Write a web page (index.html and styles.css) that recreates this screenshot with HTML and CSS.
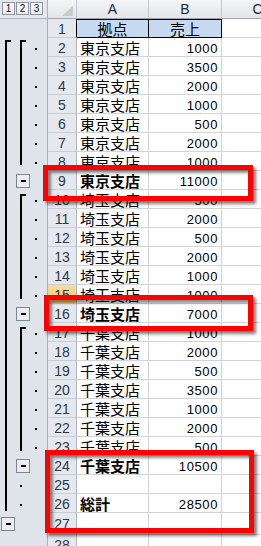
FILE: index.html
```html
<!DOCTYPE html>
<html lang="ja">

<head>
    <meta charset="UTF-8">
    <meta name="viewport" content="width=device-width, initial-scale=1.0">
    <title>小計</title>
    <link rel="stylesheet" href="styles.css">
</head>

<body>
    <div class="page">
        <div class="outline">
            <div class="levels">
                <span class="lv">1</span>
                <span class="lv">2</span>
                <span class="lv">3</span>
            </div>
            <svg class="tree" width="47" height="527" viewBox="0 0 47 527">
                <g class="line">
                    <rect x="5" y="21" width="2" height="471" />
                    <rect x="5" y="21" width="6" height="2" />
                    <rect x="20" y="21" width="2" height="125" />
                    <rect x="20" y="21" width="6" height="2" />
                    <rect x="20" y="175" width="2" height="105" />
                    <rect x="20" y="175" width="6" height="2" />
                    <rect x="20" y="308" width="2" height="124" />
                    <rect x="20" y="308" width="6" height="2" />
                </g>
                <g class="dot">
                    <rect x="35" y="29" width="2" height="2" />
                    <rect x="35" y="48" width="2" height="2" />
                    <rect x="35" y="67" width="2" height="2" />
                    <rect x="35" y="86" width="2" height="2" />
                    <rect x="35" y="105" width="2" height="2" />
                    <rect x="35" y="124" width="2" height="2" />
                    <rect x="35" y="143" width="2" height="2" />
                    <rect x="35" y="181" width="2" height="2" />
                    <rect x="35" y="200" width="2" height="2" />
                    <rect x="35" y="219" width="2" height="2" />
                    <rect x="35" y="238" width="2" height="2" />
                    <rect x="35" y="257" width="2" height="2" />
                    <rect x="35" y="276" width="2" height="2" />
                    <rect x="35" y="314" width="2" height="2" />
                    <rect x="35" y="333" width="2" height="2" />
                    <rect x="35" y="352" width="2" height="2" />
                    <rect x="35" y="371" width="2" height="2" />
                    <rect x="35" y="390" width="2" height="2" />
                    <rect x="35" y="409" width="2" height="2" />
                    <rect x="35" y="428" width="2" height="2" />
                    <rect x="20" y="466" width="2" height="2" />
                    <rect x="20" y="485" width="2" height="2" />
                </g>
                <!-- collapse buttons -->
                <rect class="box" x="16.5" y="155.5" width="13" height="13" />
                <rect class="bar" x="21" y="161" width="5" height="2" />
                <rect class="box" x="16.5" y="288.5" width="13" height="13" />
                <rect class="bar" x="21" y="294" width="5" height="2" />
                <rect class="box" x="16.5" y="440.5" width="13" height="13" />
                <rect class="bar" x="21" y="446" width="5" height="2" />
                <rect class="box" x="1.5" y="498.5" width="13" height="13" />
                <rect class="bar" x="6" y="504" width="5" height="2" />
            </svg>
        </div>

        <div class="sheet">
            <div class="corner"></div>
            <div class="ch">A</div>
            <div class="ch">B</div>
            <div class="ch">C</div>

            <div class="rh first">1</div><div class="c hd">拠点</div><div class="c hd">売上</div><div class="c"></div>
            <div class="rh">2</div><div class="c">東京支店</div><div class="c n">1000</div><div class="c"></div>
            <div class="rh">3</div><div class="c">東京支店</div><div class="c n">3500</div><div class="c"></div>
            <div class="rh">4</div><div class="c">東京支店</div><div class="c n">2000</div><div class="c"></div>
            <div class="rh">5</div><div class="c">東京支店</div><div class="c n">1000</div><div class="c"></div>
            <div class="rh">6</div><div class="c">東京支店</div><div class="c n">500</div><div class="c"></div>
            <div class="rh">7</div><div class="c">東京支店</div><div class="c n">2000</div><div class="c"></div>
            <div class="rh">8</div><div class="c">東京支店</div><div class="c n">1000</div><div class="c"></div>
            <div class="rh">9</div><div class="c b">東京支店</div><div class="c n">11000</div><div class="c"></div>
            <div class="rh">10</div><div class="c">埼玉支店</div><div class="c n">500</div><div class="c"></div>
            <div class="rh">11</div><div class="c">埼玉支店</div><div class="c n">2000</div><div class="c"></div>
            <div class="rh">12</div><div class="c">埼玉支店</div><div class="c n">500</div><div class="c"></div>
            <div class="rh">13</div><div class="c">埼玉支店</div><div class="c n">2000</div><div class="c"></div>
            <div class="rh">14</div><div class="c">埼玉支店</div><div class="c n">1000</div><div class="c"></div>
            <div class="rh sel">15</div><div class="c">埼玉支店</div><div class="c n">1000</div><div class="c"></div>
            <div class="rh">16</div><div class="c b">埼玉支店</div><div class="c n">7000</div><div class="c"></div>
            <div class="rh">17</div><div class="c">千葉支店</div><div class="c n">1000</div><div class="c"></div>
            <div class="rh">18</div><div class="c">千葉支店</div><div class="c n">2000</div><div class="c"></div>
            <div class="rh">19</div><div class="c">千葉支店</div><div class="c n">500</div><div class="c"></div>
            <div class="rh">20</div><div class="c">千葉支店</div><div class="c n">3500</div><div class="c"></div>
            <div class="rh">21</div><div class="c">千葉支店</div><div class="c n">1000</div><div class="c"></div>
            <div class="rh">22</div><div class="c">千葉支店</div><div class="c n">2000</div><div class="c"></div>
            <div class="rh">23</div><div class="c">千葉支店</div><div class="c n">500</div><div class="c"></div>
            <div class="rh">24</div><div class="c b">千葉支店</div><div class="c n">10500</div><div class="c"></div>
            <div class="rh">25</div><div class="c"></div><div class="c n"></div><div class="c"></div>
            <div class="rh">26</div><div class="c b">総計</div><div class="c n">28500</div><div class="c"></div>
            <div class="rh">27</div><div class="c"></div><div class="c n"></div><div class="c"></div>
            <div class="rh">28</div><div class="c"></div><div class="c n"></div><div class="c"></div>
        </div>

        <div class="mark m1"></div>
        <div class="mark m2"></div>
        <div class="mark m3"></div>
    </div>
</body>

</html>
```

FILE: styles.css
```css
* {
    margin: 0;
    padding: 0;
    box-sizing: border-box;
}

body {
    background-color: #fff;
}

.page {
    position: relative;
    display: flex;
    width: 261px;
    height: 546px;
    overflow: hidden;
}

/* Outline (grouping) pane */
.outline {
    width: 48px;
    flex: none;
    background-color: #dfe3ea;
    border-right: 1px solid #aab1bc;
}

.levels {
    height: 19px;
    display: flex;
    gap: 1px;
    padding: 2px 0 0 2px;
    background-color: #e4e7ed;
    border-bottom: 1px solid #b1b7c1;
}

.lv {
    width: 13px;
    height: 13px;
    display: flex;
    align-items: center;
    justify-content: center;
    border: 1px solid #8d949f;
    background: linear-gradient(#fafbfc, #e9ecf0);
    font: 10px "Liberation Sans", sans-serif;
    color: #111;
}

.tree {
    display: block;
}

.tree .line rect,
.tree .dot rect,
.tree .bar {
    fill: #000;
}

.tree .box {
    fill: #eceef2;
    stroke: #7f8692;
    stroke-width: 1;
}

/* Grid */
.sheet {
    display: grid;
    grid-template-columns: 29px 72px 73px 72px;
    grid-template-rows: repeat(27, 19px) 22px 19px;
    flex: none;
}

.corner,
.ch {
    background: linear-gradient(#f4f5f7, #e3e5e9);
    border-right: 1px solid #c3c7cd;
    border-bottom: 1px solid #9ea5ae;
}

.corner {
    position: relative;
}

.corner::after {
    content: "";
    position: absolute;
    right: 3px;
    bottom: 2px;
    width: 11px;
    height: 10px;
    background-color: #c8cacd;
    clip-path: polygon(100% 0, 100% 100%, 0 100%);
}

.ch {
    display: flex;
    align-items: center;
    justify-content: center;
    font: 14px "Liberation Sans", sans-serif;
    color: #1e2b3b;
}

.rh {
    display: flex;
    align-items: center;
    justify-content: center;
    padding-top: 1px;
    background-color: #e5e8ed;
    border-right: 1px solid #aeb5bf;
    border-bottom: 1px solid #c8ccd3;
    font: 14px "Liberation Sans", sans-serif;
    color: #2b3a4e;
}

.rh.first {
    border-right-color: #000;
}

.rh.sel {
    background: linear-gradient(#f9dca0, #f3c86f);
}

.c {
    display: flex;
    align-items: center;
    padding: 1px 0 0 3px;
    border-right: 1px solid #d4d4d4;
    border-bottom: 1px solid #d4d4d4;
    font: 15px "Noto Sans CJK JP", sans-serif;
    color: #000;
    white-space: nowrap;
    overflow: hidden;
}

.c.n {
    justify-content: flex-end;
    padding: 2px 3px 0 0;
    font: 13px "Liberation Sans", sans-serif;
    letter-spacing: 0.6px;
}

.c.b {
    font-weight: 700;
}

.c.hd {
    justify-content: center;
    padding-left: 0;
    background-color: #c5d9f1;
    border-color: #000;
    box-shadow: inset 0 1px 0 #000;
}

/* Red highlight frames drawn over the sheet */
.mark {
    position: absolute;
    border: 5px solid #f00;
    box-shadow: 3px 3px 3px rgba(0, 0, 0, 0.5), inset 3px 3px 3px rgba(0, 0, 0, 0.45);
}

.m1 {
    left: 43px;
    top: 165px;
    width: 210px;
    height: 36px;
}

.m2 {
    left: 44px;
    top: 295px;
    width: 209px;
    height: 36px;
}

.m3 {
    left: 45px;
    top: 450px;
    width: 209px;
    height: 83px;
}
```
